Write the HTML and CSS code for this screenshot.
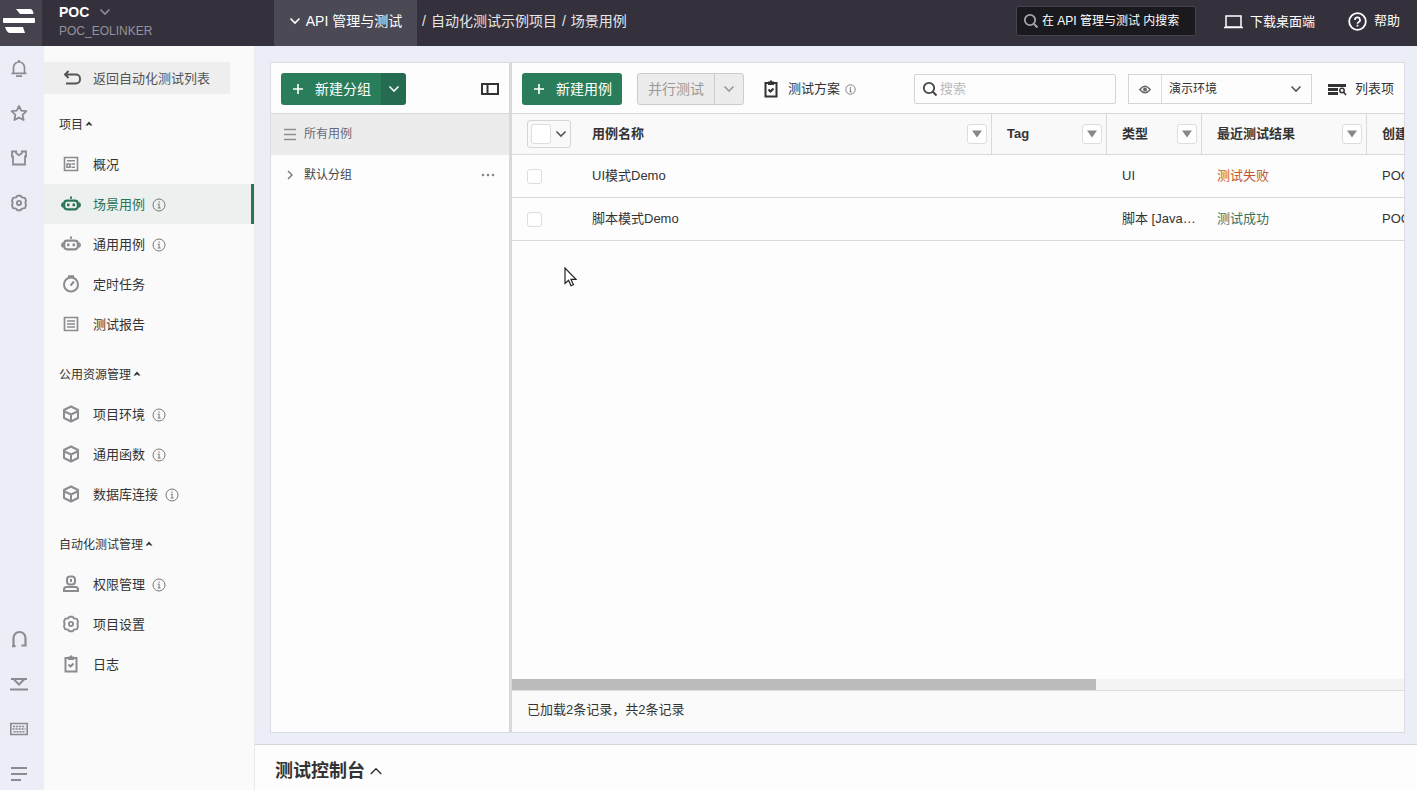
FILE: index.html
```html
<!DOCTYPE html>
<html lang="zh-CN">
<head>
<meta charset="utf-8">
<title>API 管理与测试 - 场景用例</title>
<link rel="stylesheet" href="styles.css">
</head>
<body>
<svg class="sprite" aria-hidden="true">
  <symbol id="i-down" viewBox="0 0 12 12"><path d="M1.500 3.500 6 8l4.500-4.500" fill="none" stroke="currentColor" stroke-width="1.600"/></symbol>
  <symbol id="i-info" viewBox="0 0 14 14"><circle cx="7" cy="7" r="6" fill="none" stroke="currentColor"/><path d="M6.500 3.500h1.200v1.200H6.500zM5.700 5.800h1.900V9.500h1v.9H5.700v-.9h.9V6.700h-.9z" fill="currentColor"/></symbol>
  <symbol id="i-caret" viewBox="0 0 8 6"><path d="M4 .5 7.500 4.500H5.300L4 3.200 2.700 4.500H.5z" fill="currentColor"/></symbol>
  <symbol id="i-robot" viewBox="0 0 20 18"><rect x="3.200" y="5.700" width="13.600" height="8.600" rx="3" fill="none" stroke="currentColor" stroke-width="2.200"/><path d="M2.500 7v6Q0 12.500 0 10t2.500-3zM17.500 7v6q2.500-.5 2.500-3t-2.500-3zM6 8.500h2.500v2.700H6zM11.500 8.500H14v2.700h-2.500zM9 1.500h2v2.200H9z" fill="currentColor"/></symbol>
  <symbol id="i-cube" viewBox="0 0 18 18"><path d="M9 1.500 16 5v8l-7 3.500L2 13V5zM2.500 6.500 9 9.500l6.500-3M9 9.500v6.500" fill="none" stroke="currentColor" stroke-width="2" stroke-linejoin="round"/></symbol>
  <symbol id="i-gear" viewBox="0 0 18 18"><path d="M7.300 1.700h3.400l1.200 1.700 3 .5L16 6.500 15.400 9l.6 2.500-1.100 2.600-3 .5-1.200 1.700H7.300l-1.200-1.700-3-.5L2 11.500 2.600 9 2 6.500l1.100-2.600 3-.5z" fill="none" stroke="currentColor" stroke-width="1.900" stroke-linejoin="round"/><circle cx="9" cy="9" r="2.100" fill="none" stroke="currentColor" stroke-width="1.900"/></symbol>
  <symbol id="i-clip" viewBox="0 0 18 18"><path d="M3.500 3h11v13.500h-11z" fill="none" stroke="currentColor" stroke-width="2"/><path d="M6 1.500h2V.500h2v1h2V5H6z" fill="currentColor"/><path d="m6.500 9.500 2 2 3-3" fill="none" stroke="currentColor" stroke-width="2"/></symbol>
  <symbol id="i-search" viewBox="0 0 16 16"><circle cx="7" cy="7" r="5.200" fill="none" stroke="currentColor" stroke-width="1.800"/><path d="m11 11 3.500 3.500" stroke="currentColor" stroke-width="2"/></symbol>
  <symbol id="i-plus" viewBox="0 0 12 12"><path d="M6 1v10M1 6h10" stroke="currentColor" stroke-width="1.600"/></symbol>
  <symbol id="i-filter" viewBox="0 0 10 8"><path d="M0 .5h10L5 7.500z" fill="currentColor"/></symbol>
</svg>

<div class="app">
  <header class="topbar">
    <a class="logo" href="#" aria-label="首页"><svg width="32" height="26" viewBox="0 0 32 26"><path d="M13 1h14q3 0 3.500 5H17zM0 11q0-1 1-1h30q1 0 1 1v3q0 1-1 1H1q-1 0-1-1zM2 19h18l2 6H7q-3 0-5-6z" fill="#fff"/></svg></a>
    <button class="workspace">
      <span class="workspace-name">POC <svg class="ic12"><use href="#i-down"/></svg></span>
      <span class="workspace-id">POC_EOLINKER</span>
    </button>
    <button class="module"><svg class="ic12"><use href="#i-down"/></svg>API 管理与测试</button>
    <nav class="crumbs"><span>/</span><a href="#">自动化测试示例项目</a><span>/</span><a href="#">场景用例</a></nav>
    <button class="global-search"><svg class="ic16"><use href="#i-search"/></svg>在 API 管理与测试 内搜索</button>
    <a class="top-link desktop" href="#"><svg width="19" height="14" viewBox="0 0 19 14"><path d="M2 1h15v11H2zM0 12.500h19" fill="none" stroke="#fff" stroke-width="1.500"/></svg>下载桌面端</a>
    <a class="top-link" href="#"><svg width="19" height="19" viewBox="0 0 19 19" fill="none" stroke="#fff"><circle cx="9.500" cy="9.500" r="8.300" stroke-width="1.800"/><path d="M7 8a2.500 2.500 0 1 1 3.500 2.200q-1 .5-1 1.600M9.500 12.800v1.700" stroke-width="1.700"/></svg>帮助</a>
  </header>

  <div class="body">
    <nav class="rail" aria-label="快捷栏">
      <div class="rail-group">
        <button aria-label="通知"><svg class="ic18" viewBox="0 0 18 18"><path d="M1.500 14.300h15M3.500 14V8.500a5.500 5.500 0 0 1 11 0V14M6 17.200h6" fill="none" stroke="currentColor" stroke-width="1.700"/><path d="M8 1h2v2H8z" fill="currentColor"/></svg></button>
        <button aria-label="收藏"><svg class="ic18" viewBox="0 0 18 18"><path d="m9 2 2.200 4.600 5.200.6-3.800 3.600 1 5.200L9 13.600 4.400 16l1-5.200L1.600 7.200l5.200-.6z" fill="none" stroke="currentColor" stroke-width="1.800" stroke-linejoin="round"/></svg></button>
        <button aria-label="插件市场"><svg class="ic18" viewBox="0 0 18 18"><path d="M2 2.500h4.200v1.700L9 6.200l2.800-2V2.500H16v5h-1v8H3v-8H2z" fill="none" stroke="currentColor" stroke-width="1.800"/></svg></button>
        <button aria-label="设置"><svg class="ic18"><use href="#i-gear"/></svg></button>
      </div>
      <div class="rail-group">
        <button aria-label="客服"><svg class="ic18" viewBox="0 0 18 18"><path d="M2 16.200h3.500M3.500 16V8a6 6 0 0 1 12 0v7.500h-4" fill="none" stroke="currentColor" stroke-width="2.200"/></svg></button>
        <button aria-label="下载"><svg class="ic18" viewBox="0 0 18 18"><path d="M1 4h16M3.500 4 9 9.500 14.500 4M0 14.500h18" fill="none" stroke="currentColor" stroke-width="2"/></svg></button>
        <button aria-label="快捷键"><svg class="ic18" viewBox="0 0 18 18"><path d="M.8 3.500h16.400v11H.8z" fill="none" stroke="currentColor" stroke-width="1.600"/><path d="M3 6.500h12M2.500 9h13M3.500 11.800h11" fill="none" stroke="currentColor" stroke-width="1.600" stroke-dasharray="2.200 .8"/></svg></button>
        <button aria-label="展开菜单"><svg class="ic18" viewBox="0 0 18 18"><path d="M1 3h16M1 9h16M1 15h10" stroke="currentColor" stroke-width="1.800"/></svg></button>
      </div>
    </nav>

    <aside class="sidebar">
      <a class="back" href="#"><svg class="ic18" viewBox="0 0 18 18"><path d="M5.500 1 2 4.500 5.500 8M2 4.500h11a4 4 0 0 1 4 4v1a4 4 0 0 1-4 4H3" fill="none" stroke="currentColor" stroke-width="1.900"/></svg>返回自动化测试列表</a>
      <section class="menu">
        <button class="menu-title">项目<svg class="ic8"><use href="#i-caret"/></svg></button>
        <a class="item" href="#"><svg class="ic18" viewBox="0 0 18 18"><path d="M2.500 2.500h13v13h-13zM5 5.800h8M5 9h3v3.300H5zM9.500 9H13M9.500 12.200H13" fill="none" stroke="currentColor" stroke-width="1.600"/></svg>概况</a>
        <a class="item active" href="#"><svg class="ic20"><use href="#i-robot"/></svg>场景用例<svg class="ic14"><use href="#i-info"/></svg></a>
        <a class="item" href="#"><svg class="ic20"><use href="#i-robot"/></svg>通用用例<svg class="ic14"><use href="#i-info"/></svg></a>
        <a class="item" href="#"><svg class="ic18" viewBox="0 0 18 18"><circle cx="9" cy="9.500" r="7" fill="none" stroke="currentColor" stroke-width="2"/><path d="m8.500 10.500 3.500-4M6 1.200h6" stroke="currentColor" stroke-width="2"/></svg>定时任务</a>
        <a class="item" href="#"><svg class="ic18" viewBox="0 0 18 18"><path d="M2.500 2.500h13v13h-13zM5 6h8M5 9h8M5 12h8" fill="none" stroke="currentColor" stroke-width="1.700"/></svg>测试报告</a>
      </section>
      <section class="menu">
        <button class="menu-title">公用资源管理<svg class="ic8"><use href="#i-caret"/></svg></button>
        <a class="item" href="#"><svg class="ic18"><use href="#i-cube"/></svg>项目环境<svg class="ic14"><use href="#i-info"/></svg></a>
        <a class="item" href="#"><svg class="ic18"><use href="#i-cube"/></svg>通用函数<svg class="ic14"><use href="#i-info"/></svg></a>
        <a class="item" href="#"><svg class="ic18"><use href="#i-cube"/></svg>数据库连接<svg class="ic14"><use href="#i-info"/></svg></a>
      </section>
      <section class="menu">
        <button class="menu-title">自动化测试管理<svg class="ic8"><use href="#i-caret"/></svg></button>
        <a class="item" href="#"><svg class="ic18" viewBox="0 0 18 18"><rect x="5" y="1.500" width="8" height="8" rx="3" fill="none" stroke="currentColor" stroke-width="2"/><path d="M2 16v-1.500q0-2.500 2.500-2.500h9q2.500 0 2.500 2.500V16zM9 4v3" fill="none" stroke="currentColor" stroke-width="2"/></svg>权限管理<svg class="ic14"><use href="#i-info"/></svg></a>
        <a class="item" href="#"><svg class="ic18"><use href="#i-gear"/></svg>项目设置</a>
        <a class="item" href="#"><svg class="ic18"><use href="#i-clip"/></svg>日志</a>
      </section>
    </aside>

    <main class="main">
      <div class="panel">
        <section class="groups">
          <div class="toolbar">
            <div class="split">
              <button class="btn green"><svg class="ic12"><use href="#i-plus"/></svg>新建分组</button>
              <button class="btn arrow dark" aria-label="更多"><svg class="ic12"><use href="#i-down"/></svg></button>
            </div>
            <button class="collapse" aria-label="收起分组"><svg width="18" height="12" viewBox="0 0 18 12"><path d="M1 1h16v10H1zM6.500 1v10" fill="none" stroke="currentColor" stroke-width="2"/></svg></button>
          </div>
          <a class="group-row selected" href="#"><svg class="ic14" viewBox="0 0 14 14"><path d="M1 2.500h12M1 7.500h12M1 12.500h12" stroke="#8f8f8f" stroke-width="1.400"/></svg>所有用例</a>
          <a class="group-row" href="#"><svg class="ic14" viewBox="0 0 14 14"><path d="m5 3 4 4-4 4" fill="none" stroke="#777" stroke-width="1.400"/></svg>默认分组<svg class="more" viewBox="0 0 14 4"><circle cx="2" cy="2" r="1.300"/><circle cx="7" cy="2" r="1.300"/><circle cx="12" cy="2" r="1.300"/></svg></a>
        </section>

        <section class="cases">
          <div class="toolbar">
            <button class="btn green solo"><svg class="ic12"><use href="#i-plus"/></svg>新建用例</button>
            <div class="split muted">
              <button class="btn" disabled>并行测试</button>
              <button class="btn arrow" disabled aria-label="更多"><svg class="ic12"><use href="#i-down"/></svg></button>
            </div>
            <button class="plain plan"><svg class="ic18"><use href="#i-clip"/></svg>测试方案<svg class="ic11"><use href="#i-info"/></svg></button>
            <label class="search"><svg class="ic16"><use href="#i-search"/></svg><input type="text" placeholder="搜索" aria-label="搜索"></label>
            <div class="env">
              <button aria-label="查看环境"><svg width="12" height="9" viewBox="0 0 12 9"><path d="M.8 4.500Q6-2 11.200 4.500 6 11 .8 4.500z" fill="none" stroke="currentColor" stroke-width="1.400"/><circle cx="6" cy="4.500" r="1.900" fill="currentColor"/></svg></button>
              <select aria-label="环境"><option>演示环境</option></select>
              <svg class="ic12"><use href="#i-down"/></svg>
            </div>
            <button class="plain columns"><svg width="19" height="13" viewBox="0 0 19 13"><path d="M0 1h18v3H0zM0 5h10v3H0zM0 9h10v3H0z" fill="currentColor"/><circle cx="14" cy="7.500" r="2.200" fill="none" stroke="currentColor" stroke-width="1.500"/><path d="m15.500 9 2.500 3" stroke="currentColor" stroke-width="1.500"/></svg>列表项</button>
          </div>

          <div class="table-wrap">
            <table>
              <colgroup><col class="c-check"><col class="c-name"><col class="c-tag"><col class="c-type"><col class="c-result"><col></colgroup>
              <thead>
                <tr>
                  <th class="nosep"><span class="pick"><input type="checkbox" aria-label="全选"><svg class="ic12"><use href="#i-down"/></svg></span></th>
                  <th><div class="th">用例名称<button class="filter" aria-label="筛选"><svg><use href="#i-filter"/></svg></button></div></th>
                  <th><div class="th">Tag<button class="filter" aria-label="筛选"><svg><use href="#i-filter"/></svg></button></div></th>
                  <th><div class="th">类型<button class="filter" aria-label="筛选"><svg><use href="#i-filter"/></svg></button></div></th>
                  <th><div class="th">最近测试结果<button class="filter" aria-label="筛选"><svg><use href="#i-filter"/></svg></button></div></th>
                  <th>创建者</th>
                </tr>
              </thead>
              <tbody>
                <tr><td><input type="checkbox" aria-label="选择 UI模式Demo"></td><td>UI模式Demo</td><td></td><td>UI</td><td class="fail">测试失败</td><td>POC</td></tr>
                <tr><td><input type="checkbox" aria-label="选择 脚本模式Demo"></td><td>脚本模式Demo</td><td></td><td>脚本 [JavaScript]</td><td class="pass">测试成功</td><td>POC</td></tr>
              </tbody>
            </table>
          </div>
          <div class="hscroll"><div class="thumb"></div></div>
          <footer class="summary">已加载2条记录，共2条记录</footer>
        </section>
      </div>
      <button class="console">测试控制台<svg width="12" height="8" viewBox="0 0 12 8"><path d="m.8 7 5.200-5.200L11.200 7" fill="none" stroke="currentColor" stroke-width="1.500"/></svg></button>
    </main>
  </div>
</div>
<svg class="pointer" viewBox="0 0 13 20"><path d="M1 1v15.500l3.600-3.300 2.400 5.600 2.400-1-2.400-5.500H12z" fill="#fff" stroke="#222" stroke-width="1.200"/></svg>
</body>
</html>
```

FILE: styles.css
```css
* { box-sizing: border-box; }

body {
  margin: 0;
  font: 13px/20px "Liberation Sans", "Noto Sans CJK SC", sans-serif;
  color: #333;
}

button, input, select { font: inherit; color: inherit; }
button { border: 0; padding: 0; background: none; }
a { color: inherit; text-decoration: none; }
svg { flex: none; display: block; }

.sprite { position: absolute; width: 0; height: 0; }
.ic8 { width: 8px; height: 6px; }
.ic11 { width: 11px; height: 11px; }
.ic12 { width: 12px; height: 12px; }
.ic14 { width: 14px; height: 14px; }
.ic16 { width: 16px; height: 16px; }
.ic18 { width: 18px; height: 18px; }
.ic20 { width: 20px; height: 18px; }

.app { display: flex; flex-direction: column; height: 100vh; overflow: hidden; }

/* Top bar */
.topbar {
  display: flex;
  align-items: center;
  flex: none;
  height: 46px;
  padding-right: 17px;
  background: #34313c;
  color: #fff;
}
.logo {
  display: flex;
  align-items: center;
  width: 42px;
  height: 100%;
  padding: 0 0 4px 3px;
  background: #46434f;
}
.workspace {
  width: 232px;
  padding: 0 0 4px 17px;
  text-align: left;
}
.workspace-name { display: flex; align-items: center; gap: 10px; font-size: 14px; font-weight: bold; }
.workspace-name svg { color: #8e8c95; }
.workspace-id { display: block; font-size: 12px; color: #94929b; line-height: 18px; }
.module {
  display: flex;
  align-items: center;
  justify-content: center;
  gap: 5px;
  width: 143px;
  height: 100%;
  padding-bottom: 4px;
  background: #4b4954;
  font-size: 14px;
}
.crumbs { display: flex; gap: 5px; padding: 0 0 4px 5px; font-size: 14px; color: #e6e6e8; white-space: nowrap; }
.global-search {
  display: flex;
  align-items: center;
  gap: 3px;
  width: 180px;
  height: 30px;
  margin: 0 28px 4px auto;
  padding-left: 6px;
  border: 1px solid #46434f;
  border-radius: 3px;
  background: #1a191e;
  font-size: 12px;
  white-space: nowrap;
}
.global-search svg { color: #a5a4aa; }
.top-link { display: flex; align-items: center; gap: 7px; padding-bottom: 4px; white-space: nowrap; }
.desktop { margin-right: 33px; padding-bottom: 2px; }

.body { display: flex; flex: 1; min-height: 0; }

/* Icon rail */
.rail {
  display: flex;
  flex-direction: column;
  justify-content: space-between;
  flex: none;
  width: 44px;
  padding: 7px 0 1px 4px;
  background: #ebeef6;
  color: #8b8c92;
}
.rail-group { display: grid; gap: 15px; }
.rail button { display: flex; align-items: center; width: 30px; height: 30px; justify-content: center; }

/* Project menu */
.sidebar {
  flex: none;
  width: 211px;
  padding-top: 16px;
  border-right: 1px solid #e9eaee;
  background: #fafafa;
}
.back {
  display: flex;
  align-items: center;
  gap: 12px;
  height: 32px;
  margin-right: 24px;
  padding: 2px 0 0 19px;
  background: #eee;
  color: #555;
}
.menu { margin-bottom: 10px; }
.back + .menu { margin-top: 10px; }
.menu-title { display: flex; align-items: center; gap: 2px; width: 100%; height: 40px; padding: 2px 0 0 15px; font-size: 12px; }
.menu-title svg { margin-bottom: 3px; }
.item { display: flex; align-items: center; gap: 13px; height: 40px; padding: 2px 0 0 18px; }
.item svg { color: #8b8b90; }
.item svg:first-child { margin-bottom: 2px; }
.item .ic20 { margin: 0 -1px; }
.item .ic14 { margin-left: -6px; color: #777; }
.item.active { border-right: 3px solid #2a7557; background: #ecf0ef; color: #2a7557; }
.item.active .ic20 { color: #2a7557; }

/* Workspace */
.main { display: flex; flex-direction: column; flex: 1; min-width: 0; background: #ebeef6; }
.panel {
  display: flex;
  flex: 1;
  min-height: 0;
  margin: 16px 12px 11px 15px;
  border: 1px solid #dadce2;
  background: #fdfdfd;
}
.toolbar {
  display: flex;
  align-items: center;
  flex: none;
  height: 51px;
  padding: 2px 10px 0;
  border-bottom: 1px solid #d9d9d9;
}
.groups { flex: none; width: 241px; border-right: 3px solid #d9d9d9; }
.split { display: flex; border-radius: 3px; overflow: hidden; }
.btn { display: flex; align-items: center; justify-content: center; height: 32px; padding: 0 10px 0 11px; font-size: 14px; white-space: nowrap; }
.green { gap: 11px; background: #2a7d5b; color: #fff; }
.solo { border-radius: 3px; }
.btn.arrow { width: 25px; padding: 0; }
.dark { background: #246b4f; color: #fff; }
.collapse { margin-left: auto; color: #333; }
.group-row { display: flex; align-items: center; gap: 7px; height: 41px; padding: 0 14px 2px 12px; font-size: 12px; color: #444; }
.group-row.selected { background: #ececec; color: #666a77; }
.more { width: 14px; height: 4px; margin-left: auto; fill: #888; }

.cases { display: flex; flex-direction: column; flex: 1; min-width: 0; }
.muted { margin: 0 18px 0 15px; border: 1px solid #ccc; background: #ececec; color: #999; }
.muted .btn { height: 30px; padding: 0 10px; color: inherit; }
.muted .arrow { width: 29px; padding: 0; border-left: 1px solid #ccc; }
.plain { display: flex; align-items: center; gap: 8px; white-space: nowrap; color: #333; }
.plan .ic11 { margin-left: -3px; color: #666; }
.search {
  display: flex;
  align-items: center;
  gap: 2px;
  width: 202px;
  height: 30px;
  margin: 0 12px 0 auto;
  padding: 0 7px;
  border: 1px solid #d5d5d5;
  border-radius: 2px;
  color: #444;
}
.search input { flex: 1; min-width: 0; padding: 0; border: 0; outline: 0; background: none; }
.search input::placeholder { color: #bbb; }
.env { display: flex; align-items: center; width: 184px; height: 30px; margin-right: 16px; padding-right: 9px; border: 1px solid #d5d5d5; }
.env button { display: flex; align-items: center; justify-content: center; width: 33px; height: 100%; border-right: 1px solid #ddd; color: #666; }
.env select { appearance: none; flex: 1; min-width: 0; padding: 0 0 0 7px; border: 0; background: none; font-size: 12px; }
.env > svg, .pick svg { color: #555; }

/* Case table */
.table-wrap { flex: 1; min-height: 0; overflow: hidden; }
table { width: 1362px; table-layout: fixed; border-collapse: separate; border-spacing: 0; }
.c-check { width: 65px; }
.c-name { width: 415px; }
.c-tag { width: 115px; }
.c-type { width: 95px; }
.c-result { width: 165px; }
th, td { padding: 0 4px 0 15px; text-align: left; white-space: nowrap; border-bottom: 1px solid #d9d9d9; }
th { height: 41px; border-right: 1px solid #d9d9d9; background: #f9f9f9; font-weight: bold; }
th.nosep { border-right: 0; }
td { height: 43px; overflow: hidden; text-overflow: ellipsis; }
.th { display: flex; align-items: center; justify-content: space-between; }
.filter { display: flex; align-items: center; justify-content: center; width: 20px; height: 20px; border: 1px solid #ddd; border-radius: 3px; background: #fff; color: #888; }
.filter svg { width: 10px; height: 8px; }
input[type="checkbox"] { appearance: none; display: block; width: 15px; height: 15px; margin: 0; border: 1px solid #ddd; border-radius: 3px; background: #fff; }
.pick { display: flex; align-items: center; gap: 4px; width: 44px; height: 28px; padding-left: 3px; border: 1px solid #d5d5d5; border-radius: 3px; }
.pick input[type="checkbox"] { width: 20px; height: 20px; }
.fail { color: #c05a2c; }
.pass { color: #3b7560; }

.hscroll { flex: none; height: 12px; background: #f4f4f4; border-bottom: 1px solid #ddd; }
.thumb { width: 65.5%; height: 100%; background: #bbb; }
.summary { flex: none; height: 41px; padding: 0 15px; line-height: 38px; background: #fafafa; }

.console {
  display: flex;
  align-items: center;
  gap: 5px;
  flex: none;
  height: 46px;
  padding: 6px 20px 0;
  border-top: 1px solid #d5d5d5;
  background: #fdfdfd;
  font-size: 18px;
  font-weight: bold;
}

.pointer { position: absolute; left: 564px; top: 267px; width: 13px; height: 20px; }
```
